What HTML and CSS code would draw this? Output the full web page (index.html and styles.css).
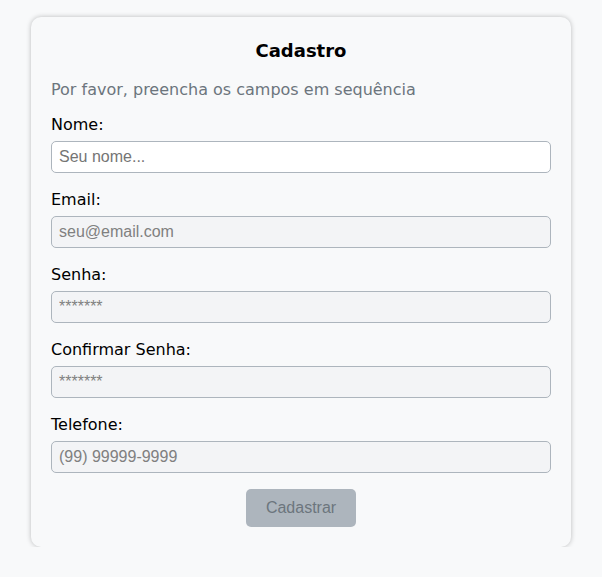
FILE: index.html
```html
<!DOCTYPE html>
<html lang="pt">
<head>
<meta charset="utf-8">
<title>Cadastro</title>
<link rel="stylesheet" href="styles.css">
</head>
<body>
<div class="card">
  <h2 class="title">Cadastro</h2>
  <p class="subtitle">Por favor, preencha os campos em sequência</p>
  <form class="form">
    <div class="group">
      <label class="label" for="nome">Nome:</label>
      <input class="input" id="nome" type="text" placeholder="Seu nome...">
    </div>
    <div class="group">
      <label class="label" for="email">Email:</label>
      <input class="input" id="email" type="email" placeholder="seu@email.com" disabled>
    </div>
    <div class="group">
      <label class="label" for="senha">Senha:</label>
      <input class="input" id="senha" type="password" placeholder="*******" disabled>
    </div>
    <div class="group">
      <label class="label" for="confirmar">Confirmar Senha:</label>
      <input class="input" id="confirmar" type="password" placeholder="*******" disabled>
    </div>
    <div class="group group-last">
      <label class="label" for="telefone">Telefone:</label>
      <input class="input" id="telefone" type="tel" placeholder="(99) 99999-9999" disabled>
    </div>
    <div class="actions">
      <button class="button" type="submit" disabled>Cadastrar</button>
    </div>
  </form>
</div>
</body>
</html>
```
FILE: styles.css
```css
html, body {
  margin: 0;
  padding: 0;
  background: #f8f9fa;
}
body {
  font-family: "DejaVu Sans", Verdana, sans-serif;
  color: #000;
  padding-top: 17px;
}
.card {
  width: 540px;
  box-sizing: border-box;
  margin: 0 auto;
  padding: 20px;
  background: #f8f9fa;
  border-radius: 10px;
  box-shadow: 0 0 5px rgba(0, 0, 0, 0.25);
}
.title {
  margin: 0 0 16px;
  font-size: 18px;
  font-weight: bold;
  text-align: center;
  line-height: 27px;
}
.subtitle {
  margin: 0 0 16px;
  font-size: 16px;
  color: #6c757d;
  line-height: 19px;
}
.form {
  display: flex;
  flex-direction: column;
}
.group {
  display: flex;
  flex-direction: column;
  margin-bottom: 17px;
}
.group-last {
  margin-bottom: 16px;
}
.label {
  font-size: 16px;
  line-height: 19px;
  margin-bottom: 7px;
}
.input {
  box-sizing: border-box;
  height: 32px;
  width: 100%;
  padding: 6px 7px;
  font-family: "Liberation Sans", Arial, sans-serif;
  font-size: 16px;
  border: 1px solid #adb5bd;
  border-radius: 5px;
  background: #fff;
  color: #000;
}
.input::placeholder {
  color: #757575;
}
.input:disabled {
  background: #f3f4f6;
}
.input:disabled::placeholder {
  color: #808080;
}
.actions {
  display: flex;
  justify-content: center;
}
.button {
  width: 110px;
  height: 38px;
  border: none;
  border-radius: 5px;
  background: #adb5bd;
  color: #6c757d;
  font-family: "Liberation Sans", Arial, sans-serif;
  font-size: 16px;
}
```
